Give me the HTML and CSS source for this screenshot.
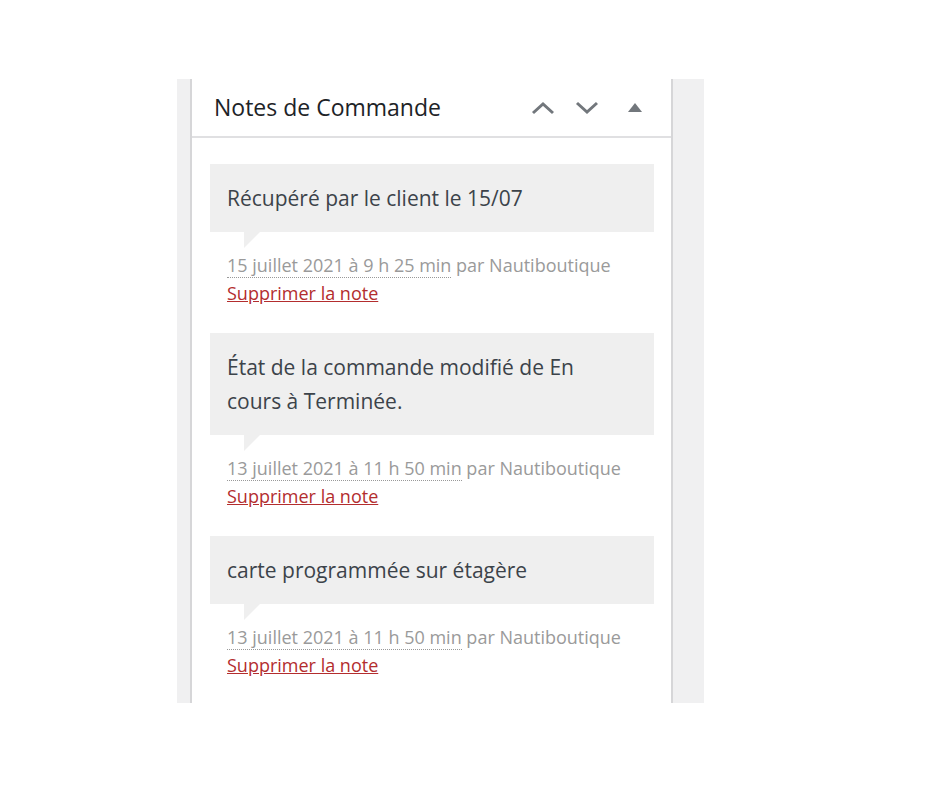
FILE: index.html
```html
<!DOCTYPE html>
<html>
<head>
    <meta charset="UTF-8">
    <title>Notes de Commande</title>
    <link rel="stylesheet" href="styles.css">
</head>
<body>
    <div class="sidebar">
        <div class="postbox">
            <div class="postbox-header">
                <h2>Notes de Commande</h2>
                <div class="handle-actions">
                    <button class="handle-btn" aria-label="Monter">
                        <svg width="24" height="14" viewBox="0 0 24 14"><path d="M2 12 L12 3 L22 12" fill="none" stroke="#72777c" stroke-width="3"/></svg>
                    </button>
                    <button class="handle-btn" aria-label="Descendre">
                        <svg width="24" height="14" viewBox="0 0 24 14"><path d="M2 2 L12 11 L22 2" fill="none" stroke="#72777c" stroke-width="3"/></svg>
                    </button>
                    <button class="handle-btn toggle" aria-label="Replier">
                        <svg width="14" height="9" viewBox="0 0 14 9"><path d="M7 0 L14 9 L0 9 Z" fill="#72777c"/></svg>
                    </button>
                </div>
            </div>
            <div class="inside">
                <ul class="order-notes">
                    <li class="note">
                        <div class="note-content">Récupéré par le client le 15/07</div>
                        <p class="meta">
                            <abbr class="exact-date" title="15/07/2021 09:25">15 juillet 2021 à 9 h 25 min</abbr> par Nautiboutique<br>
                            <a href="#" class="delete-note">Supprimer la note</a>
                        </p>
                    </li>
                    <li class="note">
                        <div class="note-content">État de la commande modifié de En cours à Terminée.</div>
                        <p class="meta">
                            <abbr class="exact-date" title="13/07/2021 11:50">13 juillet 2021 à 11 h 50 min</abbr> par Nautiboutique<br>
                            <a href="#" class="delete-note">Supprimer la note</a>
                        </p>
                    </li>
                    <li class="note">
                        <div class="note-content">carte programmée sur étagère</div>
                        <p class="meta">
                            <abbr class="exact-date" title="13/07/2021 11:50">13 juillet 2021 à 11 h 50 min</abbr> par Nautiboutique<br>
                            <a href="#" class="delete-note">Supprimer la note</a>
                        </p>
                    </li>
                </ul>
            </div>
        </div>
    </div>
</body>
</html>
```

FILE: styles.css
```css
body {
    margin: 0;
    background: #fff;
    font-family: "Open Sans", "Noto Sans", sans-serif;
    color: #3c434a;
}
.sidebar {
    margin: 79px 0 0 177px;
    width: 527px;
    height: 624px;
    padding: 0 31px 0 13px;
    box-sizing: border-box;
    background: #f0f0f1;
    overflow: hidden;
}
.postbox {
    height: 100%;
    background: #fff;
    border-left: 2px solid #d6d6d8;
    border-right: 2px solid #d6d6d8;
}
.postbox-header {
    display: flex;
    align-items: center;
    justify-content: space-between;
    height: 57px;
    padding-left: 22px;
    border-bottom: 2px solid #e0e0e2;
}
.postbox-header h2 {
    margin: 0 0 2px;
    font-size: 23px;
    font-weight: 400;
    color: #1d2327;
}
.handle-actions {
    display: flex;
    align-items: center;
    padding-right: 16px;
}
.handle-btn {
    display: flex;
    align-items: center;
    justify-content: center;
    width: 44px;
    height: 40px;
    padding: 0;
    border: none;
    background: none;
    cursor: pointer;
}
.handle-btn.toggle {
    width: 40px;
    margin-left: 6px;
}
.inside {
    padding: 26px 17px 0 18px;
}
.order-notes {
    list-style: none;
    margin: 0;
    padding: 0;
}
.note {
    margin-bottom: 26px;
}
.note-content {
    position: relative;
    background: #efefef;
    padding: 17px 50px 17px 17px;
    font-size: 21px;
    line-height: 34px;
    color: #3c434a;
}
.note-content::after {
    content: "";
    position: absolute;
    left: 34px;
    bottom: -16px;
    width: 0;
    height: 0;
    border-top: 16px solid #efefef;
    border-right: 16px solid transparent;
}
.meta {
    margin: 19px 0 0 17px;
    font-size: 18px;
    line-height: 28px;
    color: #9a9a9a;
}
.exact-date {
    text-decoration: none;
    border-bottom: 1px dotted #999;
}
.delete-note {
    color: #b32d2e;
}
```
